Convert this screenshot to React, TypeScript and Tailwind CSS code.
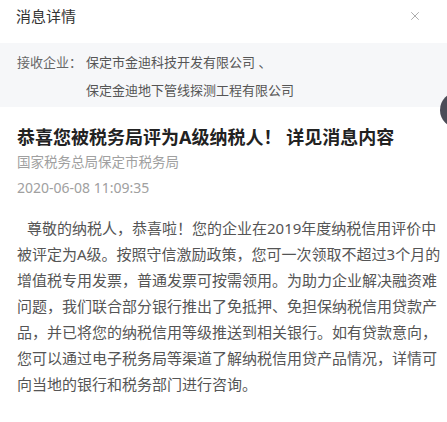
import { X } from "lucide-react";

// ── MessageDetail ────────────────────────────────────────

const font = { fontFamily: '"Noto Sans", "Noto Sans CJK SC", sans-serif' };

const body =
    "尊敬的纳税人，恭喜啦！您的企业在2019年度纳税信用评价中被评定为A级。按照守信激励政策，您可一次领取不超过3个月的增值税专用发票，普通发票可按需领用。为助力企业解决融资难问题，我们联合部分银行推出了免抵押、免担保纳税信用贷款产品，并已将您的纳税信用等级推送到相关银行。如有贷款意向，您可以通过电子税务局等渠道了解纳税信用贷产品情况，详情可向当地的银行和税务部门进行咨询。";

export default function App() {
    return (
        <div className="relative w-[447px] h-[422px] overflow-hidden bg-white" style={font}>
            {/* Header */}
            <div className="h-[43px] flex items-start justify-between pl-[16px] pr-[25px] pt-[5px]">
                <h3 className="text-[15px] leading-[22px] text-[#333]">消息详情</h3>
                <button className="mt-[4px] text-[#9a9a9a]">
                    <X className="w-[14px] h-[14px]" strokeWidth={1.4} />
                </button>
            </div>

            {/* Receivers */}
            <div className="bg-[#f6f7f9] pl-[17px] pt-[5px] pb-[3px] flex text-[13px] leading-[28px]">
                <span className="w-[69px] shrink-0 text-[#666]">接收企业：</span>
                <div className="text-[#555]">
                    <p>保定市金迪科技开发有限公司 、</p>
                    <p>保定金迪地下管线探测工程有限公司</p>
                </div>
            </div>

            {/* Content */}
            <div className="pl-[17px] pr-[2px] pt-[17px]">
                <h2 className="text-[18px] leading-[26px] font-bold text-[#222]">
                    恭喜您被税务局评为A级纳税人！ 详见消息内容
                </h2>
                <p className="text-[13.5px] leading-[25px] text-[#a0a0a0]">国家税务总局保定市税务局</p>
                <p className="text-[14px] leading-[25px] text-[#a0a0a0]">2020-06-08 11:09:35</p>
                <p className="mt-[15px] indent-[10px] text-[15px] leading-[26px] text-[#555]">{body}</p>
            </div>

            {/* floating button edge */}
            <div className="absolute left-[440px] top-[92px] w-[36px] h-[36px] rounded-full bg-[#4b4c57]" />
        </div>
    );
}
